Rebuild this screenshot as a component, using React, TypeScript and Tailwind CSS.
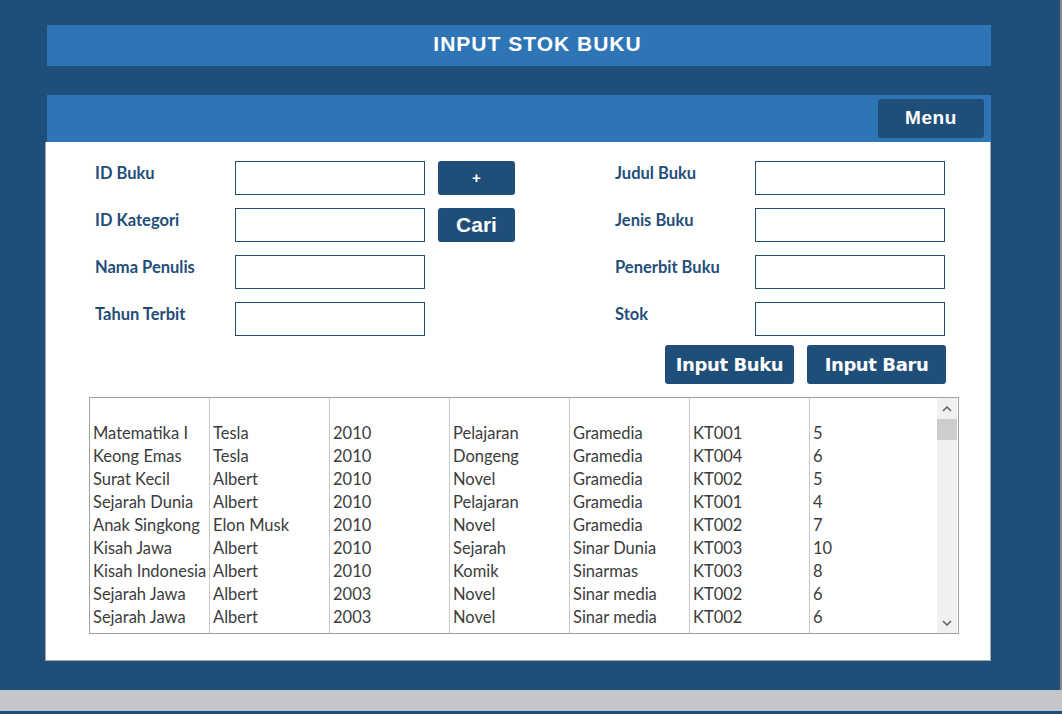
import React from 'react'

const rows: string[][] = [
  ['Matematika I', 'Tesla', '2010', 'Pelajaran', 'Gramedia', 'KT001', '5'],
  ['Keong Emas', 'Tesla', '2010', 'Dongeng', 'Gramedia', 'KT004', '6'],
  ['Surat Kecil', 'Albert', '2010', 'Novel', 'Gramedia', 'KT002', '5'],
  ['Sejarah Dunia', 'Albert', '2010', 'Pelajaran', 'Gramedia', 'KT001', '4'],
  ['Anak Singkong', 'Elon Musk', '2010', 'Novel', 'Gramedia', 'KT002', '7'],
  ['Kisah Jawa', 'Albert', '2010', 'Sejarah', 'Sinar Dunia', 'KT003', '10'],
  ['Kisah Indonesia', 'Albert', '2010', 'Komik', 'Sinarmas', 'KT003', '8'],
  ['Sejarah Jawa', 'Albert', '2003', 'Novel', 'Sinar media', 'KT002', '6'],
  ['Sejarah Jawa', 'Albert', '2003', 'Novel', 'Sinar media', 'KT002', '6'],
]

const labelFont = { fontFamily: 'Lato, "Open Sans", sans-serif' }

function Field({ label }: { label: string }) {
  return (
    <>
      <div className="h-[34px] pt-[2px] text-[16.5px] font-bold leading-[20px] text-[#1f4e79]" style={labelFont}>
        {label}
      </div>
      <div className="h-[34px] border border-[#1f4e79] bg-white" />
    </>
  )
}

function SmallButton({ children, big }: { children: React.ReactNode; big?: boolean }) {
  return (
    <button
      className={
        'flex h-[34px] w-[77px] items-center justify-center rounded-[3px] bg-[#1f4e79] font-bold text-white ' +
        (big ? 'text-[21px]' : 'text-[15px]')
      }
      style={{ fontFamily: '"Liberation Sans", Arial, sans-serif' }}
    >
      {children}
    </button>
  )
}

export default function App() {
  return (
    <div className="flex h-[714px] w-[1062px] flex-col overflow-hidden bg-[#1f4e79]">
      <div className="flex flex-1">
        <div className="flex-1">
          {/* title */}
          <div
            className="ml-[47px] mt-[25px] flex h-[41px] w-[944px] items-center justify-center bg-[#2e75b6] pb-[4px] pl-[37px] text-[21px] font-bold tracking-[1px] text-white"
            style={{ fontFamily: '"Liberation Sans", Arial, sans-serif' }}
          >
            INPUT STOK BUKU
          </div>

          {/* menu bar */}
          <div className="ml-[47px] mt-[29px] flex h-[47px] w-[944px] items-start justify-end bg-[#2e75b6] pr-[7px] pt-[4px]">
            <button
              className="flex h-[39px] w-[106px] items-center justify-center rounded-[3px] bg-[#1f4e79] text-[19px] font-bold tracking-[0.6px] text-white"
              style={{ fontFamily: '"Liberation Sans", Arial, sans-serif' }}
            >
              Menu
            </button>
          </div>

          {/* panel */}
          <div className="ml-[45px] h-[519px] w-[946px] border-x border-b border-[#a6a6a6] bg-white pl-[49px] pt-[19px]">
            <div className="flex">
              <div className="grid grid-cols-[140px_190px_13px_77px] gap-y-[13px]">
                <Field label="ID Buku" />
                <div />
                <SmallButton>+</SmallButton>
                <Field label="ID Kategori" />
                <div />
                <SmallButton big>Cari</SmallButton>
                <Field label="Nama Penulis" />
                <div />
                <div />
                <Field label="Tahun Terbit" />
                <div />
                <div />
              </div>
              <div className="ml-[100px] grid grid-cols-[140px_190px] gap-y-[13px]">
                <Field label="Judul Buku" />
                <Field label="Jenis Buku" />
                <Field label="Penerbit Buku" />
                <Field label="Stok" />
              </div>
            </div>

            <div
              className="mr-[44px] mt-[9px] flex justify-end gap-[13px] text-[18px] font-bold text-white"
              style={{ fontFamily: '"DejaVu Sans", Verdana, sans-serif' }}
            >
              <button className="h-[39px] w-[129px] rounded-[3px] bg-[#1f4e79] tracking-[-0.4px]">Input Buku</button>
              <button className="h-[39px] w-[139px] rounded-[3px] bg-[#1f4e79] tracking-[-0.4px]">Input Baru</button>
            </div>

            {/* list box */}
            <div className="-ml-[6px] mt-[13px] flex h-[237px] w-[870px] border border-[#a0a0a0] bg-white">
              <div className="flex" style={{ fontFamily: 'Lato, "Open Sans", sans-serif' }}>
                {[0, 1, 2, 3, 4, 5, 6].map((c) => (
                  <div key={c} className={'w-[120px] pt-[24px] ' + (c < 6 ? 'border-r border-[#c8c8c8]' : '')}>
                    {rows.map((r, i) => (
                      <div key={i} className="h-[23px] whitespace-nowrap pl-[3px] text-[16.5px] leading-[23px] text-[#3c3c3c]">
                        {r[c]}
                      </div>
                    ))}
                  </div>
                ))}
              </div>
              <div className="ml-auto mr-[1px] flex w-[20px] flex-col bg-[#f0f0f0]">
                <div className="flex h-[21px] items-center justify-center">
                  <svg width="10" height="6" viewBox="0 0 10 6">
                    <path d="M1 5 L5 1 L9 5" fill="none" stroke="#606060" strokeWidth="1.5" />
                  </svg>
                </div>
                <div className="h-[21px] bg-[#cdcdcd]" />
                <div className="flex-1" />
                <div className="flex h-[21px] items-center justify-center">
                  <svg width="10" height="6" viewBox="0 0 10 6">
                    <path d="M1 1 L5 5 L9 1" fill="none" stroke="#606060" strokeWidth="1.5" />
                  </svg>
                </div>
              </div>
            </div>
          </div>
        </div>
        <div className="w-[2px] bg-[#8a8a8a]" />
      </div>
      <div className="h-[21px] bg-[#c4c6ca]" />
      <div className="h-[3px] bg-[#1f4e79]" />
    </div>
  )
}
